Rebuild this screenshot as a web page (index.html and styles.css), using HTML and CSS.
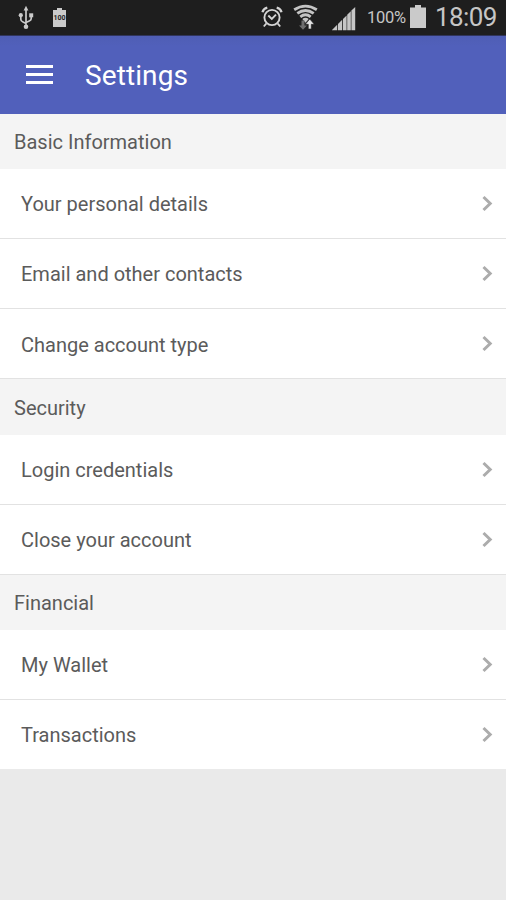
FILE: index.html
```html
<!DOCTYPE html>
<html lang="en">
<head>
<meta charset="utf-8">
<title>Settings</title>
<link rel="stylesheet" href="styles.css">
</head>
<body>
<div class="status">
  <svg class="usb" width="16" height="26" viewBox="0 0 16 26" fill="none" stroke="#cacaca" stroke-width="1.7">
    <path d="M8 4v17M2.8 12v2.2Q2.8 16 5 17l3 1.4M13.2 11v2.8q0 1.400-2 2.200L8 17.500"/>
    <path d="M8 .8l2.400 4.700H5.600z" fill="#cacaca" stroke="none"/>
    <circle cx="8" cy="21.800" r="2.300" fill="#cacaca" stroke="none"/>
    <circle cx="2.800" cy="10.200" r="2.100" fill="#cacaca" stroke="none"/>
    <path d="M11.200 8.300h4v4h-4z" fill="#cacaca" stroke="none"/>
  </svg>
  <div class="level"><span>100</span></div>
  <div class="tray">
    <svg class="alarm" width="22" height="22" viewBox="0 0 22 22" fill="none" stroke="#d4d4d4" stroke-width="1.900">
      <circle cx="11" cy="11.500" r="7.600"/>
      <path d="M7.300 9.500l3.500 3.400 4.200-4.200M5.300 17.500l-2.500 3M16.700 17.500l2.500 3"/>
      <path d="M1.500 6.200Q2.300 2.700 6.300 1.700M20.500 6.200Q19.700 2.700 15.700 1.700" stroke-width="2.300"/>
    </svg>
    <svg class="wifi" width="26" height="26" viewBox="0 0 26 26" fill="none" stroke="#c4c4c4" stroke-width="2.800">
      <path d="M1.200 5.700Q12.500-1.600 23.800 5.700M4.300 9.300Q12.500 3.600 20.700 9.300M7.300 12.800Q12.500 8.600 17.700 12.800"/>
      <path d="M9.300 15q3.200-2.600 6.400 0l-3.200 3.800z" fill="#c4c4c4" stroke="none"/>
      <path d="M8.500 16.500h3v5h2.500l-4 4.200-4-4.200h2.500z" fill="#6d6d6d" stroke="none"/>
      <path d="M15.300 25v-4.700h-3l4.500-5.300 4.500 5.300h-3V25z" fill="#e4e4e4" stroke="#1e1e1e" stroke-width=".6"/>
    </svg>
    <svg class="signal" width="24" height="24" viewBox="0 0 24 24" fill="#c6c6c6">
      <path d="M0 23.300v-.3L5.200 17.800v5.500zM6 23.300v-6.300l4.200-4.200v10.500zM11 23.300V12l3.600-3.600v14.900zM15.200 23.300V7.800L18.800 4.200v19.100zM19.400 23.300V3.600L23.200 0v23.300z"/>
    </svg>
    <span class="percent">100%</span>
    <svg class="battery" width="16" height="23" viewBox="0 0 16 23" fill="#cacaca"><path d="M0 2.500h5V0h6v2.500h5V23H0z"/></svg>
    <span class="clock">18:09</span>
  </div>
</div>
<header class="bar">
  <div class="menu"><i></i><i></i><i></i></div>
  <h1>Settings</h1>
</header>
<main>
  <section>
    <h2>Basic Information</h2>
    <ul>
      <li><span>Your personal details</span><svg viewBox="0 0 12 18"><path d="M2.500 2l6.700 6.500-6.700 6.500"/></svg></li>
      <li><span>Email and other contacts</span><svg viewBox="0 0 12 18"><path d="M2.500 2l6.700 6.500-6.700 6.500"/></svg></li>
      <li class="low"><span>Change account type</span><svg viewBox="0 0 12 18"><path d="M2.500 2l6.700 6.500-6.700 6.500"/></svg></li>
    </ul>
  </section>
  <section>
    <h2 class="tall">Security</h2>
    <ul>
      <li><span>Login credentials</span><svg viewBox="0 0 12 18"><path d="M2.500 2l6.700 6.500-6.700 6.500"/></svg></li>
      <li><span>Close your account</span><svg viewBox="0 0 12 18"><path d="M2.500 2l6.700 6.500-6.700 6.500"/></svg></li>
    </ul>
  </section>
  <section>
    <h2>Financial</h2>
    <ul>
      <li><span>My Wallet</span><svg viewBox="0 0 12 18"><path d="M2.500 2l6.700 6.500-6.700 6.500"/></svg></li>
      <li class="last"><span>Transactions</span><svg viewBox="0 0 12 18"><path d="M2.500 2l6.700 6.500-6.700 6.500"/></svg></li>
    </ul>
  </section>
</main>
</body>
</html>
```
FILE: styles.css
```css
* { box-sizing: border-box; margin: 0; padding: 0; }
body {
  background: #eaeaea;
  font-family: Roboto, "Liberation Sans", sans-serif;
  color: #5b5b5b;
  height: 900px;
  overflow: hidden;
}
.status {
  display: flex;
  align-items: flex-start;
  height: 36px;
  padding-left: 18px;
  background: #1e1e1e;
  border-bottom: 1px solid #30355c;
  color: #c6c6c6;
}
.usb { margin-top: 5px; }
.level {
  margin: 10px 0 0 19px;
  width: 13px;
  height: 17px;
  background: #cacaca;
  color: #1e1e1e;
  font-size: 7px;
  font-weight: 700;
  line-height: 17px;
  text-align: center;
  position: relative;
}
.level::before {
  content: "";
  position: absolute;
  left: 4px;
  top: -2px;
  width: 5px;
  height: 2px;
  background: #cacaca;
}
.level span { margin: 0 -2px; }
.tray { display: flex; margin-left: auto; padding-right: 9px; }
.alarm { margin-top: 6px; }
.wifi { margin: 4px 0 0 10px; }
.signal { margin: 7px 0 0 13px; }
.percent { margin: 8px 0 0 11px; width: 39px; font-size: 16.500px; letter-spacing: -.3px; line-height: 20px; white-space: nowrap; }
.battery { margin: 5px 0 0 4px; }
.clock { margin: 2px 0 0 9px; width: 62px; font-size: 26px; letter-spacing: -.6px; line-height: 30px; white-space: nowrap; }
.bar {
  display: flex;
  align-items: center;
  height: 78px;
  padding-left: 26px;
  background: linear-gradient(#4f5eb4, #5160bb 10px);
}
.menu { display: flex; flex-direction: column; gap: 5px; width: 27px; margin-top: -2px; }
.menu i { height: 3px; background: #fff; }
h1 { margin: 2px 0 0 32px; font-size: 28px; font-weight: 400; color: #fff; letter-spacing: .1px; line-height: 32px; }
h2 {
  height: 55px;
  padding-left: 14px;
  background: #f4f4f4;
  font-size: 20px;
  font-weight: 400;
  line-height: 56px;
}
h2.tall { height: 56px; line-height: 59px; }
ul { list-style: none; }
li {
  display: flex;
  align-items: center;
  justify-content: space-between;
  height: 70px;
  padding: 0 13px 0 21px;
  background: #fff;
  border-bottom: 1px solid #e2e2e2;
  font-size: 20px;
}
li.low span { margin-top: 2px; }
li.last { height: 69px; border-bottom: 0; }
li svg { width: 12px; height: 18px; fill: none; stroke: #acacac; stroke-width: 3; }
```
